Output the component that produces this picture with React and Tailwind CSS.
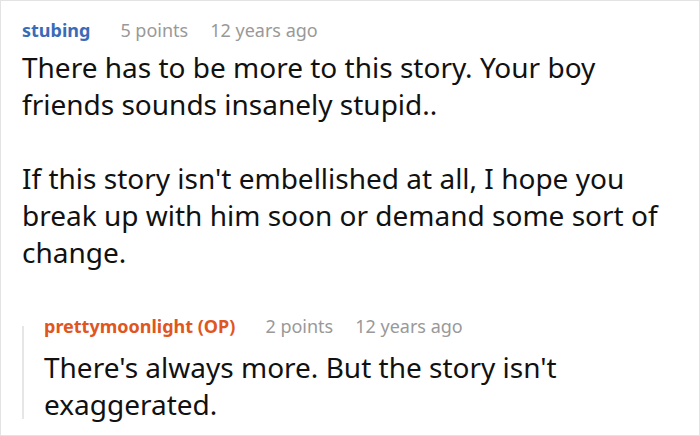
import React from "react";

function Meta({ name, nameClass, points, age }) {
  return (
    <div className="flex items-baseline text-[18px] leading-[24px]">
      <span className={`font-bold ${nameClass}`}>{name}</span>
      <span className="ml-[30px] text-[#999999]">{points}</span>
      <span className="ml-[22px] text-[#999999]">{age}</span>
    </div>
  );
}

export default function App() {
  return (
    <div className="w-[700px] h-[436px] bg-white border border-[#e3e3e3] pl-[21px] pr-[30px] pt-[17px] overflow-hidden font-['Noto_Sans','Open_Sans',sans-serif]">
      <Meta name="stubing" nameClass="text-[#3a6bb8]" points="5 points" age="12 years ago" />
      <div className="text-[28px] leading-[37px] text-[#111111] mt-[7px]">
        <p>There has to be more to this story. Your boy friends sounds insanely stupid..</p>
        <p className="mt-[37px]">
          If this story isn't embellished at all, I hope you break up with him soon or demand some sort of change.
        </p>
      </div>
      <div className="mt-[43px] flex">
        <div className="w-[2px] bg-[#e6e6e6] mt-[12px] mb-[4px] shrink-0" />
        <div className="pl-[20px]">
          <Meta
            name="prettymoonlight (OP)"
            nameClass="text-[#e0561f]"
            points="2 points"
            age="12 years ago"
          />
          <div className="text-[28px] leading-[37px] text-[#111111] mt-[11px]">
            <p>There's always more. But the story isn't exaggerated.</p>
          </div>
        </div>
      </div>
    </div>
  );
}
